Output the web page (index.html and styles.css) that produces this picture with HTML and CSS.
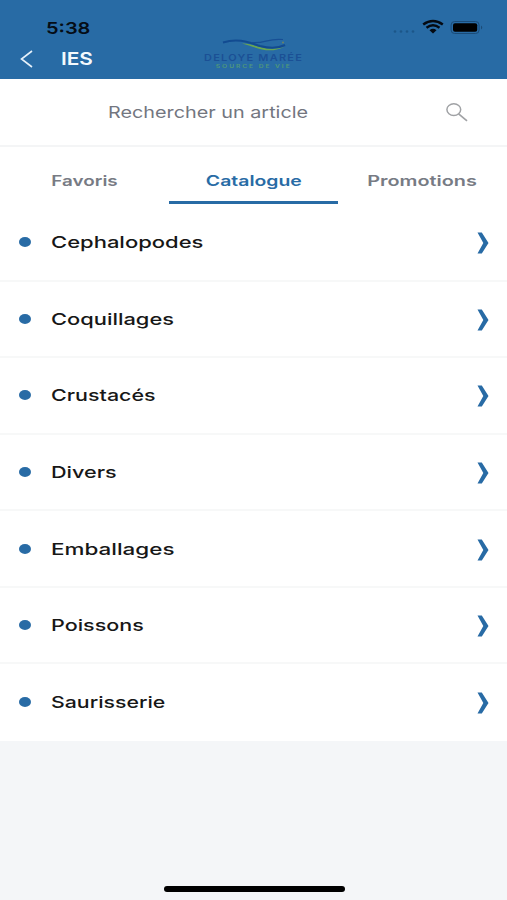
FILE: index.html
```html
<!DOCTYPE html>
<html lang="fr">
<head>
<meta charset="utf-8">
<title>Catalogue</title>
<link rel="stylesheet" href="styles.css">
</head>
<body>
<header class="header">
  <div class="status">
    <span class="time">5:38</span>
    <svg class="signals" width="94" height="20" viewBox="0 0 94 20">
      <g fill="#1c5689"><circle cx="5" cy="13.500" r="1.300"/><circle cx="11" cy="13.500" r="1.300"/><circle cx="17" cy="13.500" r="1.300"/><circle cx="23" cy="13.500" r="1.300"/></g>
      <g fill="none" stroke="#050a12" stroke-width="2.500"><path d="M33.200 6.500Q43 -0.500 52.800 6.500"/><path d="M36.500 9.700Q43 4.700 49.500 9.700"/></g>
      <path d="M39.500 12.200Q43 9.300 46.500 12.200L43 15.500Z" fill="#050a12"/>
      <rect x="61.100" y="3.500" width="28" height="12" rx="3.500" fill="none" stroke="#1b4b77"/>
      <rect x="63" y="5.200" width="24.200" height="8.600" rx="2" fill="#000"/>
      <path d="M91 7.500Q93.500 9.500 91 11.500Z" fill="#1b4b77"/>
    </svg>
  </div>
  <div class="navbar">
    <svg class="back" width="14" height="18" viewBox="0 0 14 18"><path d="M12 1L1.500 9L12 17" fill="none" stroke="#e6f1fa" stroke-width="1.600"/></svg>
    <span class="site">IES</span>
  </div>
  <div class="logo">
    <svg width="64" height="14" viewBox="0 0 64 14" fill="none">
      <path d="M20 5.500C31 4.500 42 14.500 62 9C46 17 33 8.500 20 5.500Z" fill="#69a552"/>
      <path d="M1 4.500C17 -0.500 28 5 38 8C49 11 57 10 63 7" stroke="#124b91" stroke-width="2"/>
      <path d="M29 4.500C43 6 45 0 61 1.500" stroke="#174f95" stroke-width="1.200"/>
      <circle cx="61" cy="4.500" r=".9" fill="#74865d"/>
    </svg>
    <span class="brand">DELOYE MARÉE</span>
    <span class="tagline">SOURCE DE VIE</span>
  </div>
</header>
<div class="search">
  <span class="placeholder">Rechercher un article</span>
  <svg class="magnifier" width="24" height="20" viewBox="0 0 24 20" fill="none" stroke="#a0a2a5"><ellipse cx="8.800" cy="7.600" rx="6.900" ry="5.800" stroke-width="1.500"/><path d="M13.600 11.800L22 18.800" stroke-width="1.700"/></svg>
</div>
<nav class="tabs">
  <span class="tab"><span class="label favoris">Favoris</span></span>
  <span class="tab active"><span class="label catalogue">Catalogue</span></span>
  <span class="tab"><span class="label promotions">Promotions</span></span>
</nav>
<ul class="list">
  <li class="row"><i class="dot"></i><span class="name cephalopodes">Cephalopodes</span><svg class="chevron" viewBox="0 0 12 22"><path d="M.5 .5H4.800L11.500 11L4.800 21.500H.5L6.300 11Z"/></svg></li>
  <li class="row"><i class="dot"></i><span class="name coquillages">Coquillages</span><svg class="chevron" viewBox="0 0 12 22"><path d="M.5 .5H4.800L11.500 11L4.800 21.500H.5L6.300 11Z"/></svg></li>
  <li class="row"><i class="dot"></i><span class="name crustaces">Crustacés</span><svg class="chevron" viewBox="0 0 12 22"><path d="M.5 .5H4.800L11.500 11L4.800 21.500H.5L6.300 11Z"/></svg></li>
  <li class="row"><i class="dot"></i><span class="name divers">Divers</span><svg class="chevron" viewBox="0 0 12 22"><path d="M.5 .5H4.800L11.500 11L4.800 21.500H.5L6.300 11Z"/></svg></li>
  <li class="row"><i class="dot"></i><span class="name emballages">Emballages</span><svg class="chevron" viewBox="0 0 12 22"><path d="M.5 .5H4.800L11.500 11L4.800 21.500H.5L6.300 11Z"/></svg></li>
  <li class="row"><i class="dot"></i><span class="name poissons">Poissons</span><svg class="chevron" viewBox="0 0 12 22"><path d="M.5 .5H4.800L11.500 11L4.800 21.500H.5L6.300 11Z"/></svg></li>
  <li class="row"><i class="dot"></i><span class="name saurisserie">Saurisserie</span><svg class="chevron" viewBox="0 0 12 22"><path d="M.5 .5H4.800L11.500 11L4.800 21.500H.5L6.300 11Z"/></svg></li>
</ul>
<footer class="footer"><div class="home"></div></footer>
</body>
</html>
```
FILE: styles.css
```css
* { box-sizing: border-box; }
body {
  margin: 0;
  height: 900px;
  display: flex;
  flex-direction: column;
  background: #f4f6f8;
  font-family: Inter, "Liberation Sans", sans-serif;
  overflow: hidden;
}
svg { display: block; flex: none; }
.header {
  position: relative;
  height: 79px;
  background: #286ba5;
  padding-top: 17px;
}
.status {
  display: flex;
  height: 21px;
  padding: 0 23px 0 46px;
  align-items: center;
  justify-content: space-between;
}
.time {
  font-size: 16.5px;
  font-weight: 600;
  color: #050d16;
  transform: scaleX(1.21);
  transform-origin: left;
}
.navbar {
  display: flex;
  align-items: center;
  height: 41px;
  padding-left: 20px;
}
.site {
  margin-left: 26.5px;
  font-size: 17.5px;
  font-weight: 600;
  color: #f3f9fd;
  transform: scaleX(1.19);
  transform-origin: left;
}
.logo {
  position: absolute;
  left: 200px;
  top: 38px;
  width: 107px;
  display: flex;
  flex-direction: column;
  align-items: center;
  white-space: nowrap;
}
.brand {
  font-size: 9px;
  line-height: 11px;
  letter-spacing: 1px;
  font-weight: 600;
  color: #1b5095;
  transform: scaleX(1.22);
}
.tagline {
  font-size: 5px;
  line-height: 6px;
  letter-spacing: 1.5px;
  font-weight: 600;
  color: #4f987a;
  transform: scaleX(1.32);
}
.search {
  height: 68px;
  display: flex;
  align-items: center;
  justify-content: space-between;
  padding: 0 38px 1px 108px;
  background: #fff;
  border-bottom: 2px solid #f4f5f6;
}
.placeholder {
  font-size: 16.5px;
  color: #73767f;
  transform: scaleX(1.2);
  transform-origin: left;
}
.tabs {
  display: grid;
  grid-template-columns: repeat(3, 1fr);
  height: 57px;
  background: #fff;
}
.tab {
  display: flex;
  align-items: center;
  justify-content: center;
  padding-top: 12px;
  border-bottom: 3px solid #fff;
  font-size: 14.5px;
  font-weight: 600;
  color: #777b84;
}
.tab.active { color: #286ba5; border-color: #286ba5; }
.favoris { transform: scaleX(1.3); }
.catalogue { transform: scaleX(1.34); }
.promotions { transform: scaleX(1.37); }
.list {
  margin: 0;
  padding: 1px 0 0;
  list-style: none;
  height: 537px;
  display: flex;
  flex-direction: column;
  background: #fff;
}
.row {
  flex: 1;
  display: flex;
  align-items: center;
  padding: 0 18px 0 19px;
  border-bottom: 2px solid #f7f8f8;
}
.row:last-child { border-bottom-color: #fff; }
.dot {
  width: 12px;
  height: 10px;
  border-radius: 50%;
  background: #286ba5;
}
.name {
  margin-left: 20px;
  font-size: 16.5px;
  font-weight: 500;
  color: #171717;
  transform-origin: left;
}
.cephalopodes { transform: scaleX(1.333); }
.coquillages { transform: scaleX(1.325); }
.crustaces { transform: scaleX(1.3); }
.divers { transform: scaleX(1.31); }
.emballages { transform: scaleX(1.36); }
.poissons { transform: scaleX(1.305); }
.saurisserie { transform: scaleX(1.29); }
.chevron {
  width: 12px;
  height: 22px;
  margin: 2px 0 0 auto;
  fill: #286ba5;
}
.footer {
  flex: 1;
  display: flex;
  align-items: flex-end;
  justify-content: center;
  padding: 0 0 8px 1px;
}
.home {
  width: 181px;
  height: 6px;
  border-radius: 3px;
  background: #000;
}
```
